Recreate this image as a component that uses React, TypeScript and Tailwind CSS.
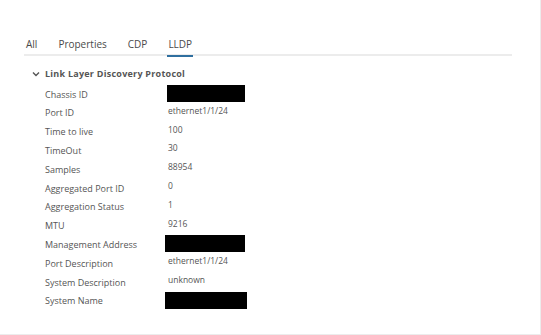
import React from "react";

const rows: [string, string | null][] = [
  ["Chassis ID", null],
  ["Port ID", "ethernet1/1/24"],
  ["Time to live", "100"],
  ["TimeOut", "30"],
  ["Samples", "88954"],
  ["Aggregated Port ID", "0"],
  ["Aggregation Status", "1"],
  ["MTU", "9216"],
  ["Management Address", null],
  ["Port Description", "ethernet1/1/24"],
  ["System Description", "unknown"],
  ["System Name", null],
];

export default function App() {
  return (
    <div
      className="w-[541px] h-[335px] bg-white border-r border-b border-[#ececec] overflow-hidden text-[#555]"
      style={{ fontFamily: "'Open Sans', 'Liberation Sans', sans-serif" }}
    >
      <div className="pt-[36px] pl-[24px] pr-[28px]">
        <div className="flex border-b-2 border-[#ececec] h-[20px] text-[10px] text-[#4a4a4a]">
          <div className="pl-[2px] mr-[21px] leading-[16px]">All</div>
          <div className="mr-[21px] leading-[16px]">Properties</div>
          <div className="mr-[20px] leading-[16px]">CDP</div>
          <div className="relative leading-[16px] px-[1px]">
            LLDP
            <div className="absolute left-0 right-0 -bottom-[3px] h-[2px] bg-[#2f6f9f]" />
          </div>
        </div>
      </div>
      <div className="pl-[32px] pt-[10px]">
        <div className="flex items-center h-[16px] text-[9px] tracking-[0.25px] font-bold text-[#555]">
          <svg width="8" height="8" viewBox="0 0 8 8" className="mr-[5px]">
            <path d="M1 2.5 L4 5.5 L7 2.5" fill="none" stroke="#555" strokeWidth="1.4" />
          </svg>
          <span>Link Layer Discovery Protocol</span>
        </div>
        <div className="pl-[13px] pt-[2px]">
          {rows.map(([k, v]) => (
            <div key={k} className="flex h-[18.8px] items-center">
              <div className="w-[121px] text-[9px] text-[#555] pt-[2px]">{k}</div>
              {v === null ? (
                <div className={`h-[17px] bg-black ${k === "Chassis ID" ? "w-[78px] ml-[1px]" : k === "System Name" ? "w-[82px] -ml-[1px]" : "w-[80px] -ml-[1px]"}`} />
              ) : (
                <div className="text-[8.5px] text-[#555] -mt-[2px] ml-[2px]">{v}</div>
              )}
            </div>
          ))}
        </div>
      </div>
    </div>
  );
}
